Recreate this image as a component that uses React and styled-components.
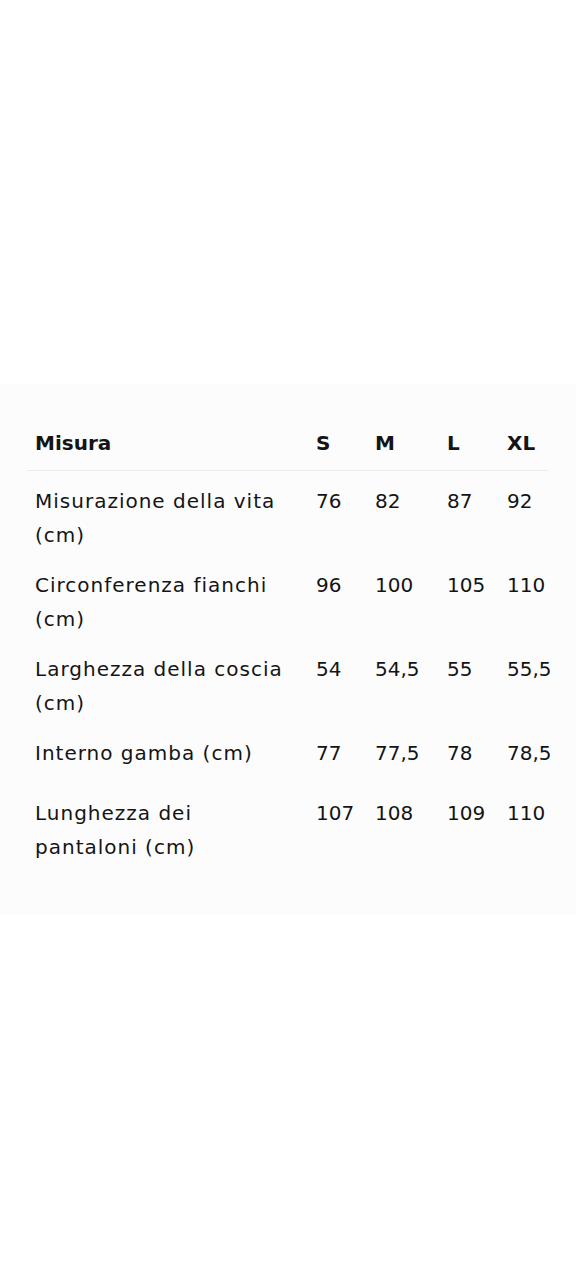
import React from "react";
import styled, { createGlobalStyle } from "styled-components";

const Global = createGlobalStyle`
  html, body { margin: 0; padding: 0; background: #ffffff; }
  body { font-family: "DejaVu Sans", "Liberation Sans", sans-serif; color: #141414; }
`;

const Page = styled.div`
  width: 576px;
  min-height: 1280px;
  padding-top: 384px;
  box-sizing: border-box;
  background: #ffffff;
`;

const Panel = styled.section`
  background: #fcfcfc;
  padding: 37px 28px 43px 27px;
`;

const Grid = styled.div`
  display: grid;
  grid-template-columns: 281px 59px 72px 60px 49px;
  font-size: 20px;
  line-height: 34px;
`;

const HeadRow = styled.div`
  display: contents;
`;

const HeadCell = styled.div`
  padding: 5px 0 10px 8px;
  font-weight: 700;
  border-bottom: 1px solid #ececec;
  white-space: nowrap;
`;

const Spacer = styled.div`
  grid-column: 1 / -1;
  height: 5px;
`;

const Cell = styled.div`
  padding: 8px 0 8px 8px;
  min-height: 44px;
  font-weight: 400;
  white-space: ${(p) => (p.$label ? "normal" : "nowrap")};
  padding-right: ${(p) => (p.$label ? "16px" : "0")};
  letter-spacing: ${(p) => (p.$label ? "1px" : "0")};
`;

const sizes = ["S", "M", "L", "XL"];

const rows = [
  ["Misurazione della vita (cm)", "76", "82", "87", "92"],
  ["Circonferenza fianchi (cm)", "96", "100", "105", "110"],
  ["Larghezza della coscia (cm)", "54", "54,5", "55", "55,5"],
  ["Interno gamba (cm)", "77", "77,5", "78", "78,5"],
  ["Lunghezza dei pantaloni (cm)", "107", "108", "109", "110"],
];

export default function App() {
  return (
    <>
      <Global />
      <Page>
        <Panel>
          <Grid>
            <HeadRow>
              <HeadCell>Misura</HeadCell>
              {sizes.map((s) => (
                <HeadCell key={s}>{s}</HeadCell>
              ))}
            </HeadRow>
            <Spacer />
            {rows.map((r) =>
              r.map((v, i) => (
                <Cell key={r[0] + i} $label={i === 0}>
                  {v}
                </Cell>
              ))
            )}
          </Grid>
        </Panel>
      </Page>
    </>
  );
}
